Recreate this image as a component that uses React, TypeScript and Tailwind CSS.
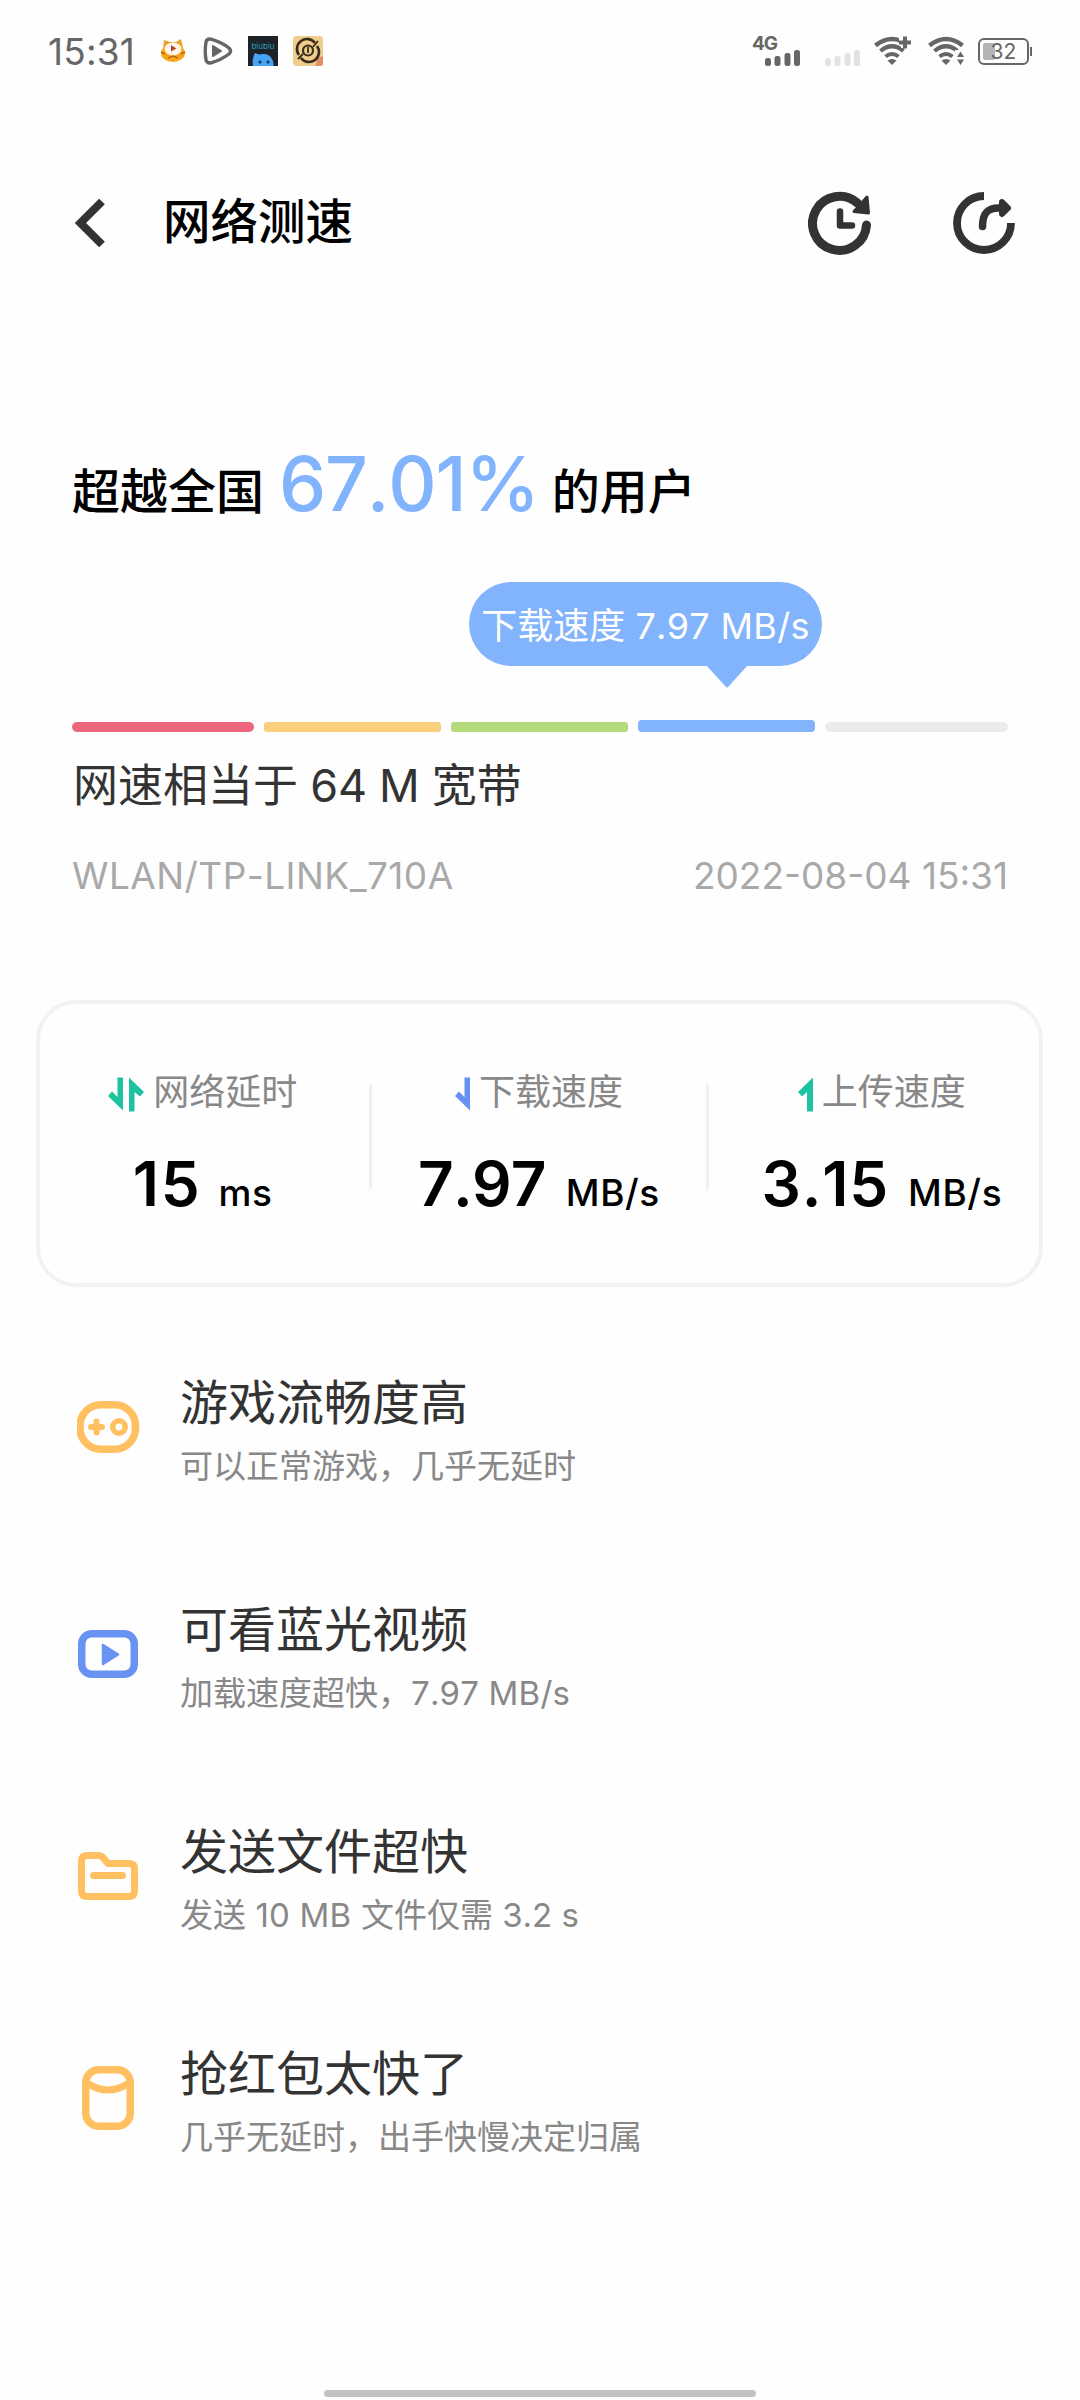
import type { ReactNode } from "react";

const BackIcon = () => (
  <svg className="w-[30px] h-[48px]" viewBox="0 0 30 48" fill="none">
    <path d="M27 2.5 L5.5 24 L27 45.5" stroke="#333" strokeWidth="8" />
  </svg>
);

const HistoryIcon = () => (
  <svg className="w-[64px] h-[64px]" viewBox="0 0 64 64" fill="none">
    <path d="M58.5 34 A27 27 0 1 1 49.5 12.2" stroke="#333" strokeWidth="9" strokeLinecap="round" />
    <path d="M59 6 L60.5 22 L46 20.5 Z" fill="#333" stroke="#333" strokeWidth="3" strokeLinejoin="round" />
    <path d="M32 20.5 V34.5 H44" stroke="#333" strokeWidth="6.5" strokeLinecap="round" strokeLinejoin="round" />
  </svg>
);

const ShareIcon = () => (
  <svg className="w-[64px] h-[64px]" viewBox="0 0 64 64" fill="none">
    <path d="M32 5 A27 27 0 1 0 59 32" stroke="#333" strokeWidth="7.8" />
    <path d="M30.5 35.5 C30.5 22 36 16.5 48 17" stroke="#333" strokeWidth="7.5" strokeLinecap="round" />
    <path d="M50 11 L56 17 L50 23 Z" fill="#333" stroke="#333" strokeWidth="6" strokeLinejoin="round" />
  </svg>
);

const CatIcon = () => (
  <svg className="w-[26px] h-[26px]" viewBox="0 0 26 26">
    <path d="M3 11 L4 2 L10 4 H16 L21 1 L23 10 Z" fill="#e8a32c" />
    <ellipse cx="13" cy="15" rx="12" ry="9" fill="#f9a61a" />
    <ellipse cx="13" cy="11" rx="8.5" ry="6.5" fill="#fff5ea" />
    <path d="M11 7 L16.5 10.5 L11 13.5 Z" fill="#b04a26" />
    <path d="M1 14 L5 16 M25 14 L21 16 M8 20 L13 18 L18 20" stroke="#b86a12" strokeWidth="1.5" fill="none" />
  </svg>
);

const PlayBadgeIcon = () => (
  <svg className="w-[30px] h-[28px]" viewBox="0 0 30 28" fill="none">
    <path
      d="M3 5 Q4 1.5 8 2.2 Q18 5 26 11 Q29 14 26 17 Q18 23 8 25.8 Q4 26.5 3 23 Q1.5 14 3 5 Z"
      stroke="#666"
      strokeWidth="3.4"
    />
    <path d="M10 9 L18 14 L10 19 Z" fill="#666" stroke="#666" strokeWidth="2" strokeLinejoin="round" />
  </svg>
);

const BiubiuIcon = () => (
  <svg className="w-[30px] h-[30px]" viewBox="0 0 30 30">
    <rect width="30" height="30" fill="#1d2229" />
    <text x="15" y="12.5" textAnchor="middle" fontSize="8" fontFamily="Inter" fill="#2b9fb8">
      biubiu
    </text>
    <path d="M5 30 C4 25 5 21 7 17 L11 18.5 C15 17.5 18 18 20 19 C24 21 26 26 25.5 30 Z" fill="#45a5f5" />
    <circle cx="12" cy="26" r="1.5" fill="#12304f" />
    <circle cx="20" cy="26" r="1.5" fill="#12304f" />
  </svg>
);

const TargetIcon = () => (
  <svg className="w-[30px] h-[30px]" viewBox="0 0 30 30" fill="none">
    <rect width="30" height="30" rx="4" fill="#efce8c" />
    <path d="M22 30 L25 22 L30 20 V27 Q30 30 27 30 Z" fill="#e08f68" />
    <path d="M6 19 A10 10 0 0 1 22 7 M24 10 A10 10 0 0 1 8 22" stroke="#3a2c1a" strokeWidth="2.6" />
    <circle cx="15" cy="14.5" r="5" stroke="#3a2c1a" strokeWidth="2.2" />
    <path d="M15 11 V17 M5 23 L10 18 M20 11 L25 5" stroke="#3a2c1a" strokeWidth="1.8" />
  </svg>
);

const SignalBars = ({ className }: { className: string }) => (
  <svg className={`w-[35px] h-[16px] ${className}`} viewBox="0 0 35 16" fill="currentColor">
    <rect x="0" y="8" width="6" height="8" rx="2.5" />
    <rect x="9.5" y="6" width="6" height="10" rx="2.5" />
    <rect x="19.5" y="3" width="6" height="13" rx="2.5" />
    <rect x="29" y="0" width="6" height="16" rx="2.5" />
  </svg>
);

const WifiArcs = () => (
  <>
    <path d="M1.5 9.5 Q18 -3.5 34.5 9.5" strokeWidth="4.5" />
    <path d="M6.5 15 Q18 5.5 29.5 15" strokeWidth="4.2" />
    <path d="M11.5 20.5 Q18 15.5 24.5 20.5" strokeWidth="4" />
    <path d="M13.5 24.5 Q18 21.5 22.5 24.5 L18 29 Z" fill="#666" stroke="none" />
  </>
);

const WifiPlusIcon = () => (
  <svg className="w-[38px] h-[30px]" viewBox="0 0 38 30" fill="none" stroke="#666">
    <WifiArcs />
    <path d="M31 0 V12 M25 6 H37" stroke="#fefefe" strokeWidth="8" />
    <path d="M31 0.5 V12.5 M25 6.5 H37" strokeWidth="4" />
  </svg>
);

const WifiTrafficIcon = () => (
  <svg className="w-[38px] h-[30px]" viewBox="0 0 38 30" fill="none" stroke="#666">
    <WifiArcs />
    <path d="M27 14 H38 V30 H27 Z" fill="#fefefe" stroke="none" />
    <path d="M29 21 L32.5 15.5 L36 21 Z M29 23.5 L32.5 29 L36 23.5 Z" fill="#666" stroke="none" />
  </svg>
);

const Battery = () => (
  <div className="flex items-center">
    <div className="relative flex h-[27px] w-[51px] items-center justify-center rounded-[6px] border-2 border-[#666]">
      <div className="absolute left-[3px] top-[3px] h-[17px] w-[12px] rounded-[2px] bg-[#b5b5b5]" />
      <span className="relative text-[21px] leading-none text-[#666]">32</span>
    </div>
    <div className="ml-px h-[9px] w-[2px] bg-[#666]" />
  </div>
);

const DownArrow = () => <path d="M9.5 0.5 H15 V33.5 L0 19 L4 14.5 L9.5 20 Z" />;

const LatencyIcon = () => (
  <svg className="w-[36px] h-[35px]" viewBox="0 0 36 35" fill="#1dc2a0">
    <DownArrow />
    <path d="M26.5 34.5 H21 V0.5 L36 15 L32 19.5 L26.5 15 Z" />
  </svg>
);

const DownloadIcon = () => (
  <svg className="w-[15px] h-[35px]" viewBox="0 0 15 35" fill="#6792f4">
    <DownArrow />
  </svg>
);

const UploadIcon = () => (
  <svg className="w-[15px] h-[35px]" viewBox="0 0 15 35" fill="#1dc2a0">
    <path d="M9 34.5 H15 V0.5 L0 15 L4 19.5 L9 15 Z" />
  </svg>
);

const GameIcon = () => (
  <svg className="w-[63px] h-[52px]" viewBox="0 0 63 52" fill="none" stroke="#ffc061">
    <rect x="3" y="3.75" width="55.5" height="44.5" rx="21" strokeWidth="7.5" />
    <path d="M14 26 H25 M19.5 20.5 V31.5" strokeWidth="6" strokeLinecap="round" />
    <circle cx="42" cy="26" r="6.2" strokeWidth="5.6" />
  </svg>
);

const VideoIcon = () => (
  <svg className="w-[60px] h-[48px]" viewBox="0 0 60 48" fill="none">
    <rect x="3.75" y="3.75" width="52.5" height="40.5" rx="10" stroke="#6893f3" strokeWidth="7.5" />
    <path d="M25 15 L40 24.5 L25 34 Z" fill="#6893f3" stroke="#6893f3" strokeWidth="2.5" strokeLinejoin="round" />
  </svg>
);

const FolderIcon = () => (
  <svg className="w-[60px] h-[56px]" viewBox="0 0 60 56" fill="none" stroke="#ffc061" strokeLinejoin="round">
    <path
      d="M9 7.500 H21 Q23 7.500 24.500 9 L30 15.500 H51 Q56.500 15.500 56.500 20.500 V43 Q56.500 48.500 51 48.500 H9 Q3.500 48.500 3.500 43 V13 Q3.500 7.500 9 7.500 Z"
      strokeWidth="7"
    />
    <path d="M15.500 27.500 H44.500" strokeWidth="7" strokeLinecap="round" />
  </svg>
);

const PacketIcon = () => (
  <svg className="w-[52px] h-[64px]" viewBox="0 0 52 64" fill="none" stroke="#ffc061">
    <rect x="3.75" y="3.75" width="44.5" height="56.5" rx="13" strokeWidth="7.5" />
    <path d="M5 17 Q26 31 47 17" strokeWidth="7" />
  </svg>
);

const segments = [
  "w-[182px] h-[10px] rounded-[5px] bg-[#ec667d]",
  "w-[177px] h-[10px] rounded-[3px] bg-[#fad07c]",
  "w-[177px] h-[10px] rounded-[3px] bg-[#b3db7c]",
  "w-[177px] h-[12px] rounded-[4px] bg-[#82b3fd]",
  "w-[183px] h-[10px] rounded-[5px] bg-[#ebebeb]",
];

type MetricProps = {
  icon: ReactNode;
  label: string;
  value: string;
  unit: string;
  className: string;
  valueClass: string;
};

const Metric = ({ icon, label, value, unit, className, valueClass }: MetricProps) => (
  <div className={`flex flex-col items-center whitespace-nowrap ${className}`}>
    <div className="mt-[66px] flex h-[48px] items-center gap-[9px] text-[36px] text-[#888]">
      {icon}
      <span className="pb-[5px] leading-[48px]">{label}</span>
    </div>
    <div className="mt-[26px] flex h-[80px] items-baseline leading-[80px] text-black">
      <span className={`text-[62px] font-semibold ${valueClass}`}>{value}</span>
      <span className="text-[37px] font-medium tracking-[0.6px]">{unit}</span>
    </div>
  </div>
);

const features = [
  { icon: <GameIcon />, title: "游戏流畅度高", detail: "可以正常游戏，几乎无延时", height: "h-[227px]" },
  {
    icon: <VideoIcon />,
    title: "可看蓝光视频",
    detail: (
      <>
        加载速度超快，<span className="tracking-[0.2px]">7.97 MB/s</span>
      </>
    ),
    height: "h-[222px]",
  },
  {
    icon: <FolderIcon />,
    title: "发送文件超快",
    detail: (
      <>
        发送<span className="tracking-[0.2px]"> 10 MB </span>文件仅需 3.2 s
      </>
    ),
    height: "h-[222px]",
  },
  { icon: <PacketIcon />, title: "抢红包太快了", detail: "几乎无延时，出手快慢决定归属", height: "h-[222px]" },
];

export default function App() {
  return (
    <div className="flex h-[2400px] w-[1080px] flex-col overflow-hidden bg-[#fefefe] font-['Inter','Noto_Sans_CJK_SC',sans-serif] [font-kerning:none]">
      {/* Status bar */}
      <div className="flex h-[102px] items-center px-[48px]">
        <span className="w-[112px] text-[37px] leading-none tracking-[0.2px] text-[#666]">15:31</span>
        <CatIcon />
        <div className="ml-[17px] flex items-center gap-[15px]">
          <PlayBadgeIcon />
          <BiubiuIcon />
          <TargetIcon />
        </div>
        <div className="ml-auto flex items-center">
          <div className="flex h-[30px] items-end">
            <span className="-mr-[12px] self-start text-[19px] font-bold leading-[16px] tracking-[-1px] text-[#666]">
              4G
            </span>
            <SignalBars className="text-[#666]" />
          </div>
          <div className="ml-[25px] flex h-[30px] items-end">
            <SignalBars className="text-[#e2e2e2]" />
          </div>
          <div className="ml-[14px] flex gap-[16px]">
            <WifiPlusIcon />
            <WifiTrafficIcon />
          </div>
          <div className="ml-[12px]">
            <Battery />
          </div>
        </div>
      </div>

      {/* Title bar */}
      <header className="flex h-[242px] items-center pl-[75px] pr-[64px]">
        <BackIcon />
        <h1 className="ml-[58px] pb-[3px] text-[47.5px] font-medium leading-[64px] text-black">网络测速</h1>
        <div className="ml-auto flex gap-[80px]">
          <HistoryIcon />
          <ShareIcon />
        </div>
      </header>

      <section className="mt-[92px] px-[72px]">
        <div className="flex h-[96px] items-baseline whitespace-nowrap text-[48px] font-medium leading-[96px] text-black">
          <span className="-translate-y-[2px]">超越全国</span>
          <span className="ml-[15px] text-[75px] tracking-[-1.2px] text-[#82b3fd]">67.01%</span>
          <span className="ml-[13px] -translate-y-[2px]">的用户</span>
        </div>

        <div className="relative ml-[397px] mt-[50px] flex h-[84px] w-[353px] items-center justify-center rounded-full bg-[#82b3fd]">
          <span className="whitespace-nowrap pt-[3px] text-[36px] leading-[50px] text-white">
            下载速度 <span className="tracking-[0.3px]">7.97 MB/s</span>
          </span>
          <svg className="absolute left-[237px] top-[83px] h-[23px] w-[42px]" viewBox="0 0 42 23" fill="#82b3fd">
            <path d="M0 0 H42 L22 22 Q21 23 20 22 Z" />
          </svg>
        </div>

        <div className="mt-[54px] flex items-end gap-[10px]">
          {segments.map((segment) => (
            <div key={segment} className={`shrink-0 ${segment}`} />
          ))}
        </div>

        <p className="mt-[24px] whitespace-nowrap pl-px text-[45px] leading-[60px] text-[#333]">
          网速相当于<span className="tracking-[-0.3px]"> 64 M </span>宽带
        </p>
        <div className="mt-[35px] flex justify-between whitespace-nowrap text-[37px] leading-[50px] text-[#a9a9a9]">
          <span className="tracking-[0.45px]">WLAN/TP-LINK_710A</span>
          <span>2022-08-04 15:31</span>
        </div>
      </section>

      {/* Measured values */}
      <section className="ml-[36px] mt-[99px] flex h-[287px] w-[1007px] shrink-0 rounded-[40px] border-4 border-[#f2f2f2]">
        <Metric
          icon={<LatencyIcon />}
          label="网络延时"
          value="15"
          unit="ms"
          className="w-[326px]"
          valueClass="mr-[17px] tracking-[1.8px]"
        />
        <div className="ml-[4px] mt-[80px] h-[105px] w-[3px] bg-[#f0f0f0]" />
        <Metric
          icon={<DownloadIcon />}
          label="下载速度"
          value="7.97"
          unit="MB/s"
          className="w-[334px]"
          valueClass="mr-[20px] tracking-[-0.8px]"
        />
        <div className="mt-[80px] h-[105px] w-[3px] bg-[#f0f0f0]" />
        <Metric
          icon={<UploadIcon />}
          label="上传速度"
          value="3.15"
          unit="MB/s"
          className="ml-[16px] w-[315px]"
          valueClass="mr-[19px] tracking-[0.8px]"
        />
      </section>

      {/* What the connection is good for */}
      <section className="mt-[82px] pl-[72px]">
        {features.map(({ icon, title, detail, height }) => (
          <div key={title} className={`flex gap-[36px] ${height}`}>
            <div className="flex h-[116px] w-[72px] items-center justify-center">{icon}</div>
            <div className="whitespace-nowrap pt-[2px]">
              <h2 className="text-[48px] leading-[64px] text-[#333]">{title}</h2>
              <p className="text-[33px] leading-[62px] text-[#888]">{detail}</p>
            </div>
          </div>
        ))}
      </section>

      <div className="mx-auto mb-[3px] mt-auto h-[7px] w-[432px] shrink-0 rounded-full bg-[#c2c2c2]" />
    </div>
  );
}
